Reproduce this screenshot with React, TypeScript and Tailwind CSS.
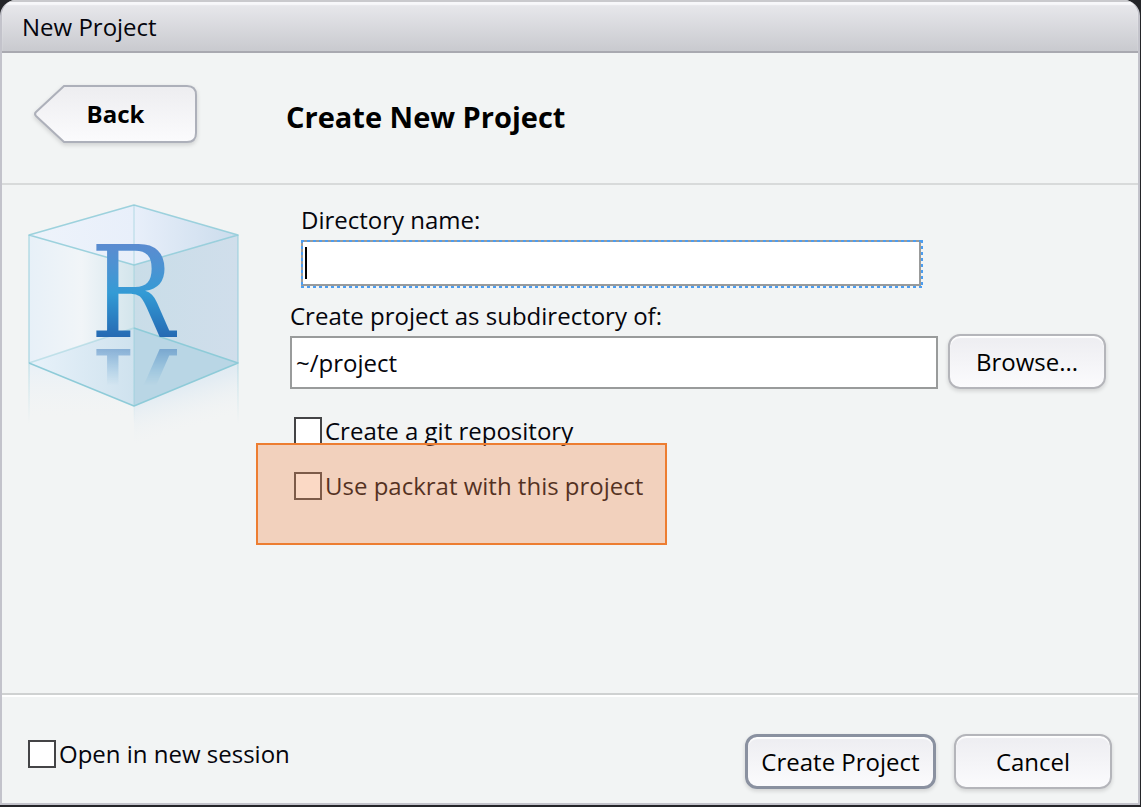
import React from "react";

const buttonBase =
  "flex h-[55px] items-center justify-center rounded-xl bg-linear-to-b from-[#ededf1] to-[#fbfbfd] text-black shadow-[0_2px_4px_rgba(0,0,0,0.14),inset_0_2px_1px_rgba(255,255,255,0.9)]";

function Check({ id, label }: { id: string; label: string }) {
  return (
    <div className="flex h-7 items-center gap-[3px]">
      <input
        id={id}
        type="checkbox"
        className="size-7 shrink-0 appearance-none border-2 border-[#444446] bg-white"
      />
      <label htmlFor={id} className="whitespace-nowrap leading-7">
        {label}
      </label>
    </div>
  );
}

function CubeLogo() {
  return (
    <div className="relative shrink-0">
      <svg width="212" height="260" viewBox="0 0 212 260" className="block" aria-hidden="true">
        <defs>
          <linearGradient id="leftFace" x1="0" x2="1">
            <stop offset="0" stopColor="#e7f0f8" />
            <stop offset="0.5" stopColor="#f1f5f8" />
            <stop offset="1" stopColor="#d3e5ec" />
          </linearGradient>
          <linearGradient id="rightFace" x1="0" x2="1">
            <stop offset="0" stopColor="#c9dde8" />
            <stop offset="1" stopColor="#d0deeb" />
          </linearGradient>
          <linearGradient id="topFace" x1="0" x2="1">
            <stop offset="0" stopColor="#eef3fb" />
            <stop offset="0.5" stopColor="#e8effa" />
            <stop offset="1" stopColor="#cbdcec" />
          </linearGradient>
          <linearGradient id="floorLeft" x1="0" x2="1">
            <stop offset="0" stopColor="#e8f2fa" />
            <stop offset="1" stopColor="#cfe2ee" />
          </linearGradient>
          <linearGradient id="below" x1="90" y1="150" x2="118" y2="240" gradientUnits="userSpaceOnUse">
            <stop offset="0" stopColor="#cfe0ee" stopOpacity="0.9" />
            <stop offset="0.55" stopColor="#d9e7f2" stopOpacity="0.6" />
            <stop offset="1" stopColor="#f2f4f4" stopOpacity="0" />
          </linearGradient>
          <linearGradient id="belowLeft" x1="0" y1="150" x2="0" y2="215" gradientUnits="userSpaceOnUse">
            <stop offset="0" stopColor="#e3eef8" stopOpacity="0.9" />
            <stop offset="1" stopColor="#f2f4f4" stopOpacity="0" />
          </linearGradient>
          <linearGradient id="edgeFade" x1="0" y1="159" x2="0" y2="220" gradientUnits="userSpaceOnUse">
            <stop offset="0" stopColor="#8ecbd8" stopOpacity="0.3" />
            <stop offset="1" stopColor="#8ecbd8" stopOpacity="0" />
          </linearGradient>
        </defs>
        <path d="M1 158 L106 202 L106 250 L1 215Z" fill="url(#belowLeft)" />
        <path d="M106 202 L210 158 L210 235 L106 255Z" fill="url(#below)" />
        <path d="M1 31 L106 61 L106 124 L1 159Z" fill="url(#leftFace)" />
        <path d="M106 61 L210 31 L210 159 L106 124Z" fill="url(#rightFace)" />
        <path d="M1 31 L106 1 L210 31 L106 61Z" fill="url(#topFace)" />
        <path d="M1 159 L106 124 L106 202Z" fill="url(#floorLeft)" />
        <path d="M210 159 L106 124 L106 202Z" fill="#b9d6e5" />
        <g fill="none" stroke="#8ecbd8" strokeWidth="1.5" strokeLinejoin="round">
          <path d="M1 31 L106 1 L210 31 L106 61Z" opacity="0.85" />
          <path d="M1 159 L106 124" opacity="0.45" />
          <path d="M106 124 L210 159 L106 202 L1 159" />
          <path d="M1 31V159M210 31V159" opacity="0.6" />
          <path d="M106 1V61M106 61V202" opacity="0.4" />
        </g>
        <g fill="url(#edgeFade)">
          <rect x="0" y="159" width="2" height="76" />
          <rect x="105" y="202" width="2" height="33" />
          <rect x="209" y="159" width="2" height="76" />
        </g>
      </svg>
      <span className="absolute top-[39px] left-[62px] block h-[100px] bg-linear-to-b from-[#5b8bd0] via-[#339bd5] to-[#2463ae] bg-clip-text font-['DejaVu_Serif_Condensed','DejaVu_Serif',serif] text-[128px] leading-[100px] text-transparent [-webkit-box-reflect:below_0px_linear-gradient(transparent_58%,rgba(0,0,0,0.5)_100%)]">
        R
      </span>
    </div>
  );
}

function FocusDots() {
  const across =
    "absolute left-0 h-[2px] w-full bg-[repeating-linear-gradient(90deg,#4c9df0_0px,#4c9df0_3px,transparent_3px,transparent_6px)]";
  const down =
    "absolute top-0 h-full w-[2px] bg-[repeating-linear-gradient(180deg,#4c9df0_0px,#4c9df0_3px,transparent_3px,transparent_6px)]";
  return (
    <span className="pointer-events-none absolute top-0 left-0 -right-[2px] -bottom-[2px]">
      <span className={`${across} top-0`} />
      <span className={`${across} bottom-0`} />
      <span className={`${down} left-0`} />
      <span className={`${down} right-0`} />
    </span>
  );
}

export default function App() {
  return (
    <div className="flex min-h-screen bg-[#242529] pr-px pb-[2px] font-['Open_Sans','Noto_Sans',sans-serif] text-[24px] leading-8 text-[#05050c]">
      <main className="flex flex-1 flex-col overflow-hidden rounded-t-2xl border-x-2 border-b-2 border-[#c3c3cb] bg-[#f2f4f4]">
        <header className="flex h-[53px] items-center border-t-2 border-b-2 border-t-[#c9c9cd] border-b-[#a9a9b0] bg-linear-to-b from-[#e9e9ed] to-[#c9cacf] pl-5 shadow-[inset_0_3px_1px_#f7f7fa]">
          <h1>New Project</h1>
        </header>

        <div className="flex h-[132px] items-start border-b-2 border-[#d8dada] pt-8 pl-8">
          <button type="button" className="relative flex h-[58px] w-[163px] items-center justify-center font-bold text-black">
            <svg
              viewBox="0 0 163 58"
              className="absolute inset-0 size-full overflow-visible drop-shadow-[0_2px_2px_rgba(0,0,0,0.15)]"
              aria-hidden="true"
            >
              <defs>
                <linearGradient id="backFill" x1="0" y1="0" x2="0" y2="1">
                  <stop offset="0" stopColor="#ededf0" />
                  <stop offset="1" stopColor="#fbfbfd" />
                </linearGradient>
              </defs>
              <path
                d="M30 1H153Q162 1 162 10V48Q162 57 153 57H30L2 31Q0 29 2 27Z"
                fill="url(#backFill)"
                stroke="#adb0ba"
                strokeWidth="2"
              />
            </svg>
            <span className="relative">Back</span>
          </button>
          <h2 className="ml-[89px] pt-4 text-[29px] leading-8 font-bold text-black">Create New Project</h2>
        </div>

        <section className="flex flex-1 items-start border-b-2 border-[#cfd1d1] pt-[19px] pr-8 pl-[26px]">
          <CubeLogo />
          <div className="ml-[50px] min-w-0 flex-1">
            <div className="pl-[11px]">
              <label htmlFor="dirname" className="block h-9 leading-8">
                Directory name:
              </label>
              <div className="relative w-[620px] max-w-full">
                <input
                  id="dirname"
                  type="text"
                  className="block h-[46px] w-full border-2 border-[#999b9b] bg-white px-1 outline-none"
                />
                <FocusDots />
                <span className="absolute top-[7px] left-1 h-8 w-[2px] bg-black" />
              </div>
            </div>

            <label htmlFor="parent" className="mt-[14px] block h-9 leading-8">
              Create project as subdirectory of:
            </label>
            <div className="flex items-start gap-[10px]">
              <input
                id="parent"
                type="text"
                defaultValue="~/project"
                className="block h-[53px] min-w-0 flex-1 border-2 border-[#999b9b] bg-white px-1 outline-none"
              />
              <button type="button" className={`${buttonBase} -mt-[2px] w-[158px] border-2 border-[#b4b5ba]`}>
                Browse...
              </button>
            </div>

            <div className="mt-7 flex flex-col gap-[27px] pl-1">
              <Check id="git" label="Create a git repository" />
              <div className="relative">
                <Check id="packrat" label="Use packrat with this project" />
                <span className="pointer-events-none absolute -top-[29px] -left-[38px] h-[102px] w-[411px] border-2 border-[#ed7d31] bg-[#f38b4f]/33" />
              </div>
            </div>
          </div>
        </section>

        <footer className="flex h-[108px] items-start justify-between border-t-2 border-white pt-[37px] pr-[26px] pl-[26px]">
          <div className="pt-[6px]">
            <Check id="session" label="Open in new session" />
          </div>
          <div className="flex gap-[18px]">
            <button type="button" className={`${buttonBase} w-[191px] border-3 border-[#8a91a0] whitespace-nowrap`}>
              Create Project
            </button>
            <button type="button" className={`${buttonBase} w-[158px] border-2 border-[#b4b5ba]`}>
              Cancel
            </button>
          </div>
        </footer>
      </main>
    </div>
  );
}
